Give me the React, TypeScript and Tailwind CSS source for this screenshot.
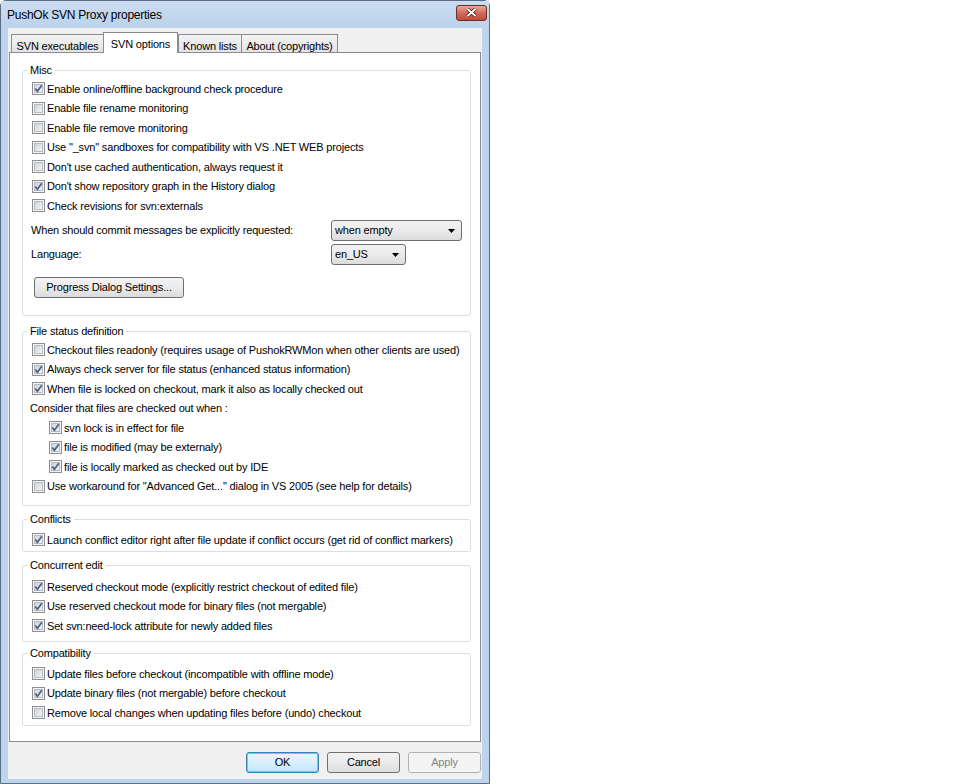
import React from 'react';

type Item = { label: string; checked?: boolean; indent?: boolean };

function Box({ checked }: { checked?: boolean }) {
  return (
    <svg width="13" height="13" viewBox="0 0 13 13" className="shrink-0">
      <defs>
        <linearGradient id="cbInner" x1="0" y1="0" x2="1" y2="1">
          <stop offset="0" stopColor="#cdd1d6" />
          <stop offset="1" stopColor="#f6f6f6" />
        </linearGradient>
      </defs>
      <rect x="0.5" y="0.5" width="12" height="12" fill="#f5f5f5" stroke="#8e8f8f" />
      <rect x="2.5" y="2.5" width="8" height="8" fill="url(#cbInner)" stroke="#b7bbc1" />
      {checked && (
        <path d="M3.3 6.4 L5.4 9.2 L9.8 3.2" fill="none" stroke="#4b5f8a" strokeWidth="1.7" />
      )}
    </svg>
  );
}

function Check({ label, checked, indent }: Item) {
  return (
    <div className={`flex items-center h-[19.5px] ${indent ? 'pl-[26px]' : 'pl-[9px]'}`}>
      <Box checked={checked} />
      <span className="ml-[2px] whitespace-nowrap">{label}</span>
    </div>
  );
}

function Arrow() {
  return (
    <svg width="7" height="4" viewBox="0 0 7 4">
      <path d="M0 0 H7 L3.5 4 Z" fill="#000" />
    </svg>
  );
}

function Combo({ value, width }: { value: string; width: string }) {
  return (
    <div
      className={`${width} h-[21px] flex items-center justify-between pl-[3px] pr-[6px] rounded-[3px] border border-[#707070] bg-gradient-to-b from-[#f2f2f2] via-[#ebebeb] to-[#dcdcdc]`}
    >
      <span>{value}</span>
      <Arrow />
    </div>
  );
}

function Group({
  title,
  className,
  children,
}: {
  title: string;
  className: string;
  children: React.ReactNode;
}) {
  return (
    <div className={`relative ml-[12px] w-[449px] border border-[#d5dfe5] rounded-[3px] ${className}`}>
      <span className="absolute -top-[8px] left-[4px] px-[3px] bg-white leading-[14px]">{title}</span>
      {children}
    </div>
  );
}

const misc: Item[] = [
  { label: 'Enable online/offline background check procedure', checked: true },
  { label: 'Enable file rename monitoring' },
  { label: 'Enable file remove monitoring' },
  { label: 'Use "_svn" sandboxes for compatibility with VS .NET WEB projects' },
  { label: "Don't use cached authentication, always request it" },
  { label: "Don't show repository graph in the History dialog", checked: true },
  { label: 'Check revisions for svn:externals' },
];

const status: Item[] = [
  { label: 'Checkout files readonly (requires usage of PushokRWMon when other clients are used)' },
  { label: 'Always check server for file status (enhanced status information)', checked: true },
  { label: 'When file is locked on checkout, mark it also as locally checked out', checked: true },
];

const consider: Item[] = [
  { label: 'svn lock is in effect for file', checked: true, indent: true },
  { label: 'file is modified (may be externaly)', checked: true, indent: true },
  { label: 'file is locally marked as checked out by IDE', checked: true, indent: true },
];

const concurrent: Item[] = [
  { label: 'Reserved checkout mode (explicitly restrict checkout of edited file)', checked: true },
  { label: 'Use reserved checkout mode for binary files (not mergable)', checked: true },
  { label: 'Set svn:need-lock attribute for newly added files', checked: true },
];

const compat: Item[] = [
  { label: 'Update files before checkout (incompatible with offline mode)' },
  { label: 'Update binary files (not mergable) before checkout', checked: true },
  { label: 'Remove local changes when updating files before (undo) checkout' },
];

const tabs = [
  { name: 'SVN executables', w: 'w-[93px]' },
  { name: 'SVN options', w: 'w-[75px]', active: true },
  { name: 'Known lists', w: 'w-[64px]' },
  { name: 'About (copyrights)', w: 'w-[97px]' },
];

export default function App() {
  return (
    <div className="w-[960px] h-[784px] bg-white text-black text-[11px] tracking-[-0.17px] font-['Liberation_Sans',Arial,sans-serif]">
      <div className="w-[490px] h-[784px] flex flex-col border border-[#5a6d84] rounded-t-[6px] bg-[#bed4ec]">
        {/* title bar */}
        <div className="h-[27px] flex items-center justify-between pl-[6px] pr-[2px] bg-gradient-to-b from-[#cadcf0] to-[#bcd3ec]">
          <span className="text-[12px] tracking-[-0.25px] leading-none pt-[1px]">PushOk SVN Proxy properties</span>
          <div className="w-[31px] h-[16px] mb-[4px] flex items-center justify-center rounded-[3px] border border-[#6e2b25] bg-gradient-to-b from-[#e5a99f] via-[#cf6a5c] to-[#c4483a]">
            <svg width="11" height="9" viewBox="0 0 11 9">
              <path d="M1.5 1 L9.5 8 M9.5 1 L1.5 8" stroke="#3b1c18" strokeWidth="3.4" />
              <path d="M1.5 1 L9.5 8 M9.5 1 L1.5 8" stroke="#fff" strokeWidth="1.8" />
            </svg>
          </div>
        </div>

        {/* client area */}
        <div className="ml-[7px] w-[474px] h-[751px] bg-[#f0f0f0] flex flex-col">
          <div className="flex items-end h-[21px] mt-[4px] ml-[3px]">
            {tabs.map((t, i) =>
              t.active ? (
                <div
                  key={t.name}
                  className={`relative z-10 -ml-[1px] ${t.w} h-[21px] flex items-start justify-center pt-[3px] bg-white border border-b-0 border-[#898c95]`}
                >
                  {t.name}
                </div>
              ) : (
                <div
                  key={t.name}
                  className={`${i === 3 ? '-ml-[1px]' : ''} ${t.w} h-[19px] flex items-start justify-center pt-[3px] border border-[#898c95] bg-gradient-to-b from-[#f3f3f3] to-[#e3e3e3]`}
                >
                  {t.name}
                </div>
              ),
            )}
          </div>

          <div className="-mt-[1px] ml-[1px] w-[472px] h-[690px] bg-white border border-[#898c95] flex flex-col">
            <Group title="Misc" className="mt-[17px] h-[246px] pt-[8px]">
              {misc.map((m) => (
                <Check key={m.label} {...m} />
              ))}
              <div className="flex items-center mt-[4.5px]">
                <span className="w-[308px] pl-[8px]">When should commit messages be explicitly requested:</span>
                <Combo value="when empty" width="w-[131px]" />
              </div>
              <div className="flex items-center mt-[3px]">
                <span className="w-[308px] pl-[8px]">Language:</span>
                <Combo value="en_US" width="w-[75px]" />
              </div>
              <button className="mt-[12px] ml-[11px] w-[150px] h-[21px] rounded-[3px] border border-[#707070] bg-gradient-to-b from-[#f2f2f2] via-[#ebebeb] to-[#dcdcdc]">
                Progress Dialog Settings...
              </button>
            </Group>

            <Group title="File status definition" className="mt-[15px] h-[175px] pt-[8px]">
              {status.map((m) => (
                <Check key={m.label} {...m} />
              ))}
              <div className="h-[19.5px] flex items-center pl-[7px]">Consider that files are checked out when :</div>
              {consider.map((m) => (
                <Check key={m.label} {...m} />
              ))}
              <Check label={'Use workaround for "Advanced Get..." dialog in VS 2005 (see help for details)'} />
            </Group>

            <Group title="Conflicts" className="mt-[13px] h-[33px] pt-[10px]">
              <Check
                label="Launch conflict editor right after file update if conflict occurs (get rid of conflict markers)"
                checked
              />
            </Group>

            <Group title="Concurrent edit" className="mt-[13px] h-[77px] pt-[11px]">
              {concurrent.map((m) => (
                <Check key={m.label} {...m} />
              ))}
            </Group>

            <Group title="Compatibility" className="mt-[11px] h-[73px] pt-[10px]">
              {compat.map((m) => (
                <Check key={m.label} {...m} />
              ))}
            </Group>
          </div>

          <div className="flex justify-end gap-[8px] mt-[10px] pr-[1px]">
            <button className="w-[73px] h-[21px] rounded-[3px] border border-[#3c7fb1] bg-gradient-to-b from-[#eaf6fd] via-[#d9f0fc] to-[#bee6fd] shadow-[inset_0_0_0_1px_#48d8fb]">
              OK
            </button>
            <button className="w-[73px] h-[21px] rounded-[3px] border border-[#707070] bg-gradient-to-b from-[#f2f2f2] via-[#ebebeb] to-[#dcdcdc]">
              Cancel
            </button>
            <button className="w-[73px] h-[21px] rounded-[3px] border border-[#adb2b5] bg-[#f4f4f4] text-[#838383]">
              Apply
            </button>
          </div>
        </div>
      </div>
    </div>
  );
}
